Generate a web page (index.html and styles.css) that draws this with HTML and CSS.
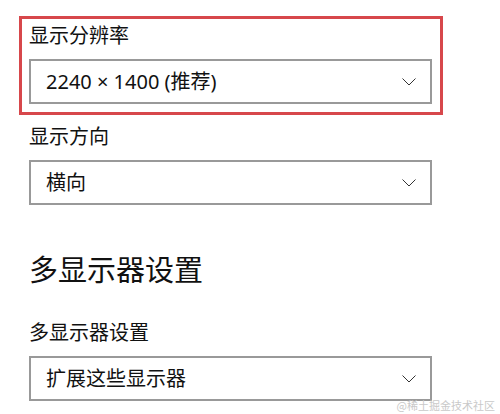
FILE: index.html
```html
<!DOCTYPE html>
<html lang="zh-CN">
<head>
    <meta charset="UTF-8">
    <meta name="viewport" content="width=device-width, initial-scale=1.0">
    <title>显示设置</title>
    <link rel="stylesheet" href="styles.css">
</head>
<body>
    <div class="page">
        <div class="field field-highlight">
            <div class="field-label">显示分辨率</div>
            <div class="select">
                <span class="select-value">2240 × 1400 (推荐)</span>
                <svg class="chevron" width="14" height="8" viewBox="0 0 14 8">
                    <polyline points="0.5,0.5 7,7 13.5,0.5" fill="none" stroke="#333" stroke-width="1"/>
                </svg>
            </div>
        </div>

        <div class="field">
            <div class="field-label">显示方向</div>
            <div class="select">
                <span class="select-value">横向</span>
                <svg class="chevron" width="14" height="8" viewBox="0 0 14 8">
                    <polyline points="0.5,0.5 7,7 13.5,0.5" fill="none" stroke="#333" stroke-width="1"/>
                </svg>
            </div>
        </div>

        <h2 class="section-title">多显示器设置</h2>

        <div class="field">
            <div class="field-label">多显示器设置</div>
            <div class="select">
                <span class="select-value">扩展这些显示器</span>
                <svg class="chevron" width="14" height="8" viewBox="0 0 14 8">
                    <polyline points="0.5,0.5 7,7 13.5,0.5" fill="none" stroke="#333" stroke-width="1"/>
                </svg>
            </div>
        </div>
    </div>

    <div class="watermark">@稀土掘金技术社区</div>
</body>
</html>
```

FILE: styles.css
```css
:root {
    --text-color: #111;
    --border-color: #999;
    --highlight-color: #d7474b;
}

body {
    margin: 0;
    background: white;
    color: var(--text-color);
    font-family: "Noto Sans", "Noto Sans CJK SC", sans-serif;
}

.page {
    padding: 16px 0 0 19px;
    width: 424px;
}

.field {
    padding: 0 11px 0 10px;
}

.field-highlight {
    border: 3px solid var(--highlight-color);
    padding: 4px 8px 8px 7px;
    margin-bottom: 9px;
}

.field-label {
    font-size: 20px;
    line-height: 26px;
    margin-bottom: 10px;
}

.select {
    box-sizing: border-box;
    height: 45px;
    border: 2px solid var(--border-color);
    display: flex;
    align-items: center;
    justify-content: space-between;
    padding: 0 14px 0 15px;
}

.select-value {
    font-size: 20px;
    line-height: 26px;
}

.chevron {
    display: block;
}

.section-title {
    font-size: 29px;
    font-weight: normal;
    line-height: 40px;
    margin: 45px 0 30px 10px;
}

.watermark {
    position: absolute;
    right: 5px;
    top: 397px;
    font-family: "Noto Sans CJK SC", serif;
    font-size: 11px;
    color: #c9c9c9;
}
```
